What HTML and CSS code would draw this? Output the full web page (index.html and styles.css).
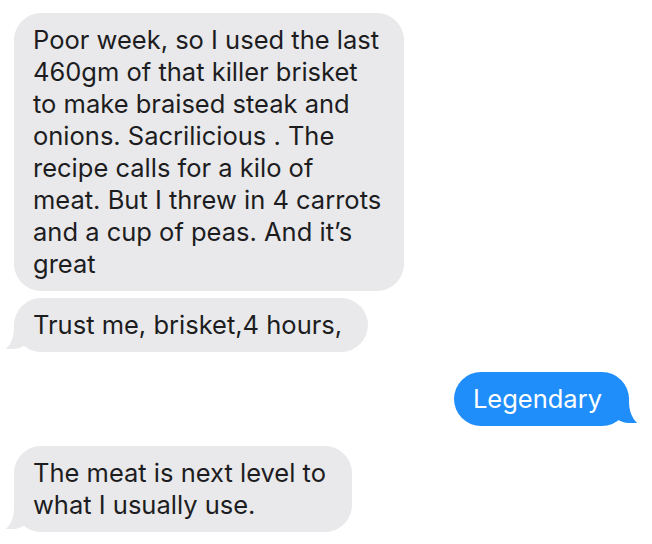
FILE: index.html
```html
<!DOCTYPE html>
<html>
<head>
<meta charset="utf-8">
<link rel="stylesheet" href="styles.css">
</head>
<body>
<div class="chat">
  <div class="msg them first">Poor week, so I used the last<br>460gm of that killer brisket<br>to make braised steak and<br>onions. Sacrilicious . The<br>recipe calls for a kilo of<br>meat. But I threw in 4 carrots<br>and a cup of peas. And it’s<br>great</div>
  <div class="msg them tail gap-s">Trust me, brisket,4 hours,</div>
  <div class="msg me tail gap-l">Legendary</div>
  <div class="msg them tail gap-l">The meat is next level to<br>what I usually use.</div>
</div>
</body>
</html>
```
FILE: styles.css
```css
html, body {
  margin: 0;
  padding: 0;
  background: #ffffff;
}
.chat {
  display: flex;
  flex-direction: column;
  padding: 13px 15px 0 14px;
  font-family: "Inter", "Liberation Sans", Arial, sans-serif;
  font-size: 25.5px;
  line-height: 32px;
}
.msg {
  position: relative;
  box-sizing: border-box;
  padding: 11px 26px 11px 19px;
  border-radius: 27px;
  white-space: nowrap;
}
.first {
  padding-right: 23px;
}
.them {
  align-self: flex-start;
  background: #e9e9eb;
  color: #1d1d1f;
}
.me {
  align-self: flex-end;
  background: #1f8efa;
  color: #ffffff;
  margin-right: 8px;
  padding-right: 27px;
}
.gap-s { margin-top: 7px; }
.gap-l { margin-top: 20px; }

.them.tail::before {
  content: "";
  position: absolute;
  bottom: 3px;
  left: -9px;
  width: 26px;
  height: 26px;
  background: #e9e9eb;
  border-bottom-right-radius: 18px 16px;
}
.them.tail::after {
  content: "";
  position: absolute;
  bottom: 0;
  left: -26px;
  width: 26px;
  height: 30px;
  background: #ffffff;
  border-bottom-right-radius: 16px 24px;
}
.me.tail::before {
  content: "";
  position: absolute;
  bottom: 3px;
  right: -8px;
  width: 26px;
  height: 26px;
  background: #1f8efa;
  border-bottom-left-radius: 18px 16px;
}
.me.tail::after {
  content: "";
  position: absolute;
  bottom: 0;
  right: -26px;
  width: 26px;
  height: 30px;
  background: #ffffff;
  border-bottom-left-radius: 16px 24px;
}
```
